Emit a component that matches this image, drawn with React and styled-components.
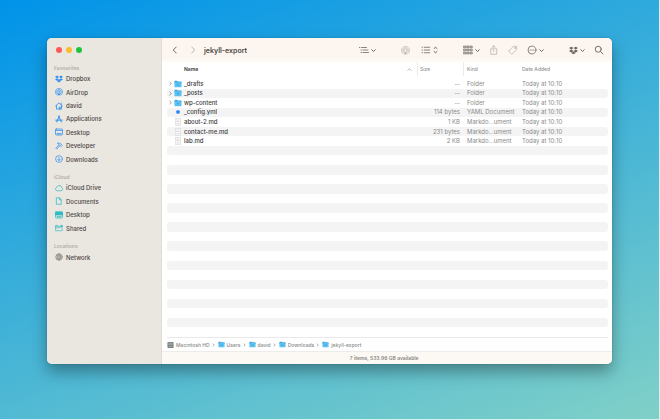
import styled, { createGlobalStyle } from "styled-components";
import { FaDropbox } from "react-icons/fa";

const GlobalStyle = createGlobalStyle`
  * {
    box-sizing: border-box;
  }

  body {
    margin: 0;
    font-family: Inter, "Liberation Sans", sans-serif;
    font-size: 7px;
    color: #4a4745;
  }

  button {
    padding: 0;
    border: 0;
    background: none;
    color: inherit;
    font: inherit;
  }

  a {
    color: inherit;
    text-decoration: none;
  }

  ul, ol {
    margin: 0;
    padding: 0;
    list-style: none;
  }

  svg {
    display: block;
    flex: none;
  }
`;

const Screen = styled.div`
  display: flex;
  min-height: 100vh;
  padding: 38px 47px 55px 47px;
  border: solid #d9eef0;
  border-width: 0 1px 1px 0;
  background: linear-gradient(160deg, #0093e9 0%, #80d0c7 100%);
`;

const Window = styled.div`
  flex: 1;
  display: flex;
  min-width: 0;
  overflow: hidden;
  border-radius: 5px;
  background: #ffffff;
  box-shadow: 0 8px 16px rgba(0, 0, 0, 0.34), 0 0 2px rgba(0, 0, 0, 0.2);
`;

const Sidebar = styled.aside`
  flex: none;
  width: 115px;
  padding: 9px 7px;
  border-right: 1px solid #dfdbd6;
  background: #eae6e0;
`;

const Lights = styled.div`
  display: flex;
  gap: 4px;
  padding: 0 2px;
  margin-bottom: 11px;
`;

const Light = styled.button`
  width: 6px;
  height: 6px;
  border-radius: 50%;
  background: ${({ $color }) => $color};
`;

const Group = styled.section`
  margin-bottom: 7px;
`;

const GroupTitle = styled.h2`
  margin: 0;
  font-size: 5px;
  font-weight: 600;
  line-height: 8px;
  color: #b3aea9;
`;

const Places = styled.ul`
  display: grid;
  grid-auto-rows: 1fr;
  min-height: ${({ $height }) => $height}px;
`;

const Place = styled.a`
  display: flex;
  align-items: center;
  gap: 3px;
  height: 100%;
  padding-left: 1px;
  font-size: 6px;
  font-weight: 500;

  svg {
    color: ${({ $tint }) => $tint};
  }
`;

const Main = styled.main`
  flex: 1;
  display: flex;
  flex-direction: column;
  min-width: 0;
`;

const Toolbar = styled.header`
  display: flex;
  align-items: center;
  height: 24px;
  padding: 0 8px;
  background: linear-gradient(#fdf6f0 80%, #fefaf7);
`;

const Title = styled.h1`
  flex: 1;
  margin: 0 0 0 6px;
  font-size: 7px;
  font-weight: 600;
`;

const Cluster = styled.div`
  display: flex;
  align-items: center;
  gap: ${({ $gap }) => $gap || 9}px;
  margin-left: ${({ $first }) => ($first ? 0 : 25)}px;
`;

const Tool = styled.button`
  display: flex;
  align-items: center;
  gap: 2px;
  color: ${({ $dim }) => ($dim ? "#b9b4b0" : "#6a6764")};
`;

const Files = styled.table`
  flex: 1;
  display: flex;
  flex-direction: column;
  margin: 0 4px 0 5px;
  color: #8a8a8a;

  thead {
    display: block;
  }

  tbody {
    flex: 1;
    display: grid;
    grid-auto-rows: 1fr;
  }

  tr {
    display: grid;
    grid-template-columns: 1fr 46px 55px 90px;
    align-items: center;
    min-height: 9px;
  }

  tbody tr:nth-child(even) {
    border-radius: 3px;
    background: #f4f4f5;
  }
`;

const Column = styled.th`
  display: flex;
  align-items: center;
  justify-content: space-between;
  height: 14px;
  margin-bottom: 3px;
  padding: 0 5px 0 ${({ $indent }) => $indent || 4}px;
  border-left: ${({ $line }) => ($line ? "1px solid #ebebeb" : "0")};
  font-size: 5px;
  font-weight: ${({ $active }) => ($active ? 700 : 500)};
  color: ${({ $active }) => ($active ? "#4b4b4b" : "#929292")};
`;

const Cell = styled.td`
  padding: 0 3px 0 4px;
  font-size: 6px;
  line-height: 8px;
  text-align: ${({ $right }) => ($right ? "right" : "left")};
  white-space: nowrap;
`;

const NameCell = styled(Cell)`
  display: flex;
  align-items: center;
  gap: 2px;
  padding: 0 2px;
  font-weight: 500;
  color: #3c3c3c;
`;

const Toggle = styled.span`
  width: 3px;
  color: #8c8c8c;
`;

const PathBar = styled.nav`
  height: 14px;
  margin: 0 4px 0 5px;
  border-top: 1px solid #e9e9e9;

  ol {
    display: flex;
    align-items: center;
    height: 100%;
  }

  li {
    display: flex;
    align-items: center;
    color: #8a8a8a;
  }
`;

const Crumb = styled.a`
  display: flex;
  align-items: center;
  gap: 2px;
  padding-right: 2px;
  font-size: 5px;
  font-weight: 500;
`;

const Separator = styled.span`
  padding-right: 3px;
`;

const StatusBar = styled.footer`
  height: 13px;
  padding-right: 6px;
  border-top: 1px solid #efebe8;
  background: #fcf8f4;
  font-size: 5px;
  font-weight: 600;
  font-variant-numeric: tabular-nums;
  line-height: 12px;
  text-align: center;
  color: #8a8682;
`;

const Glyph = ({ size = 8, box = 16, weight = 1.5, children }) => (
  <svg
    width={size}
    height={size}
    viewBox={`0 0 ${box} ${box}`}
    fill="none"
    stroke="currentColor"
    strokeWidth={weight}
    strokeLinecap="round"
    strokeLinejoin="round"
    aria-hidden="true"
  >
    {children}
  </svg>
);

const AirDropIcon = ({ size }) => (
  <Glyph size={size} weight={1.3}>
    <path d="M4 14A7.2 7.2 0 1 1 12 14" />
    <path d="M5 11.6A4.7 4.7 0 1 1 11 11.6" />
    <path d="M6.4 9.6A2.4 2.4 0 1 1 9.6 9.6" />
    <path d="M8 9.2L4.8 14.6H11.2Z" fill="currentColor" stroke="none" />
  </Glyph>
);

const HomeIcon = () => (
  <Glyph weight={1.6}>
    <path d="M1 8.2L8 1.8L15 8.2M3 7V14.2H13V7M12.4 2.5V5" />
    <path d="M8.5 14V10H10.5V14" />
  </Glyph>
);

const AppsIcon = () => (
  <Glyph weight={2}>
    <path d="M9 2L3.2 14M7 2L12.8 14M1.5 10.3H9M12 10.3H14.5" />
  </Glyph>
);

const DesktopIcon = ({ filled }) => (
  <Glyph>
    <rect x="1" y="2" width="14" height="12" rx="1.5" />
    <path d="M1 5H15" />
    {filled && <rect x="1" y="2" width="14" height="6" fill="currentColor" />}
    <path d="M4 11.5H12" strokeWidth="2" />
  </Glyph>
);

const HammerIcon = () => (
  <Glyph weight={1.4}>
    <path d="M5.5 2.6C9 1 11 2.5 12 4L14.5 7L12.5 9L9.5 6.5L8 7L7.2 5.6L8.4 4.2Q7.4 3 5.5 2.6Z" />
    <path d="M7.2 6.6L1.6 12.4L3.4 14.2L9.2 8" />
  </Glyph>
);

const DownloadIcon = () => (
  <Glyph weight={1.4}>
    <circle cx="8" cy="8" r="6.8" />
    <path d="M8 4.5V11M5.5 8.7L8 11.2L10.5 8.7" />
  </Glyph>
);

const CloudIcon = () => (
  <Glyph>
    <path d="M4 13.5A3.2 3.2 0 0 1 2.8 7.4A2.8 2.8 0 0 1 5.4 4.8A4.2 4.2 0 0 1 13 7A3.3 3.3 0 0 1 12.4 13.5Z" />
  </Glyph>
);

const DocumentIcon = () => (
  <Glyph>
    <path d="M3.5 1.5H9L12.5 5.5V14.5H3.5ZM8.8 1.8V5.8H12.3" />
  </Glyph>
);

const SharedIcon = () => (
  <Glyph weight={1.3}>
    <path d="M9.5 4.6H1.2V13.5H14.5V8M1.2 5V2.8H5L6.4 4.4M1.2 7.4H10.5" />
    <circle cx="13" cy="4.4" r="1.8" fill="currentColor" />
  </Glyph>
);

const NetworkIcon = () => (
  <Glyph weight={1}>
    <circle cx="8" cy="8" r="6.5" />
    <ellipse cx="8" cy="8" rx="3" ry="6.5" />
    <path d="M1.5 8H14.5M8 1.5V14.5M2.8 4.5H13.2M2.8 11.5H13.2" />
  </Glyph>
);

const ChevronDown = () => (
  <Glyph size={5} box={10} weight={2}>
    <path d="M1.5 3.5L5 7L8.5 3.5" />
  </Glyph>
);

const UpDown = () => (
  <svg width="5" height="10" viewBox="0 0 10 20" fill="none" stroke="currentColor" strokeWidth="2" aria-hidden="true">
    <path d="M1.5 7.5L5 4.5L8.5 7.5M1.5 12.5L5 15.5L8.5 12.5" />
  </svg>
);

const Arrow = ({ back }) => (
  <Glyph size={10} box={20} weight={2}>
    <path d={back ? "M12.5 4L6.5 10L12.5 16" : "M7.5 4L13.5 10L7.5 16"} />
  </Glyph>
);

const RowArrow = ({ height = 5 }) => (
  <svg width="3" height={height} viewBox="0 0 6 10" fill="none" stroke="currentColor" strokeWidth="1.6" aria-hidden="true">
    <path d="M1 1.5L4.8 5L1 8.5" />
  </svg>
);

const OutlineIcon = () => (
  <Glyph size={10} box={20} weight={1.6}>
    <path d="M0.8 5H1.8M5 5H15M4 10H5M8 10H18M4 15H5M8 15H19" />
  </Glyph>
);

const ListIcon = () => (
  <Glyph size={10} box={20} weight={1.6}>
    <path d="M2 4.5H3M6.5 4.5H17.5M2 10H3M6.5 10H17.5M2 15.5H3M6.5 15.5H17.5" />
  </Glyph>
);

const GridIcon = () => (
  <Glyph size={10} box={20} weight={1.3}>
    {[1.5, 8, 14.5].map((x) => (
      <g key={x}>
        <rect x={x} y="2" width="4" height="3.4" fill="currentColor" fillOpacity="0.3" />
        <rect x={x} y="8.2" width="4" height="3.4" fill="currentColor" fillOpacity="0.3" />
        <rect x={x} y="14.4" width="4" height="3.4" fill="currentColor" fillOpacity="0.3" />
      </g>
    ))}
  </Glyph>
);

const ShareIcon = () => (
  <Glyph size={10} box={20} weight={1.6}>
    <path d="M7 7.5H3.5V18.5H15.5V7.5H12M9.5 13V1.5M6.3 4.5L9.5 1.3L12.7 4.5" />
  </Glyph>
);

const TagIcon = () => (
  <Glyph size={10} box={20} weight={1.5}>
    <path d="M2 11.5L10.5 3L17 2.5L17.5 9L8.5 18Q7.5 18.5 6.5 17.5L2.2 13.5Q1.5 12.5 2 11.5Z" />
    <circle cx="14" cy="6" r="1" />
  </Glyph>
);

const MoreIcon = () => (
  <Glyph size={10} box={20} weight={1.6}>
    <circle cx="10" cy="10" r="8" />
    <path d="M6.3 10H6.5M9.9 10H10.1M13.5 10H13.7" strokeWidth="2.4" />
  </Glyph>
);

const SearchIcon = () => (
  <Glyph size={10} box={20} weight={1.9}>
    <circle cx="8.5" cy="8.5" r="6" />
    <path d="M13 13L18 18" />
  </Glyph>
);

const FolderIcon = ({ size = 8 }) => (
  <svg width={size} height={size} viewBox="0 0 16 16" aria-hidden="true">
    <path d="M1 2.5Q1 1.5 2 1.5H6L7.5 3H14Q15 3 15 4V7H1Z" fill="#3ba7dd" />
    <rect x="1" y="4.5" width="14" height="10" rx="1" fill="#5bc1f2" />
    <rect x="6" y="7.5" width="4" height="3.5" fill="#47addf" />
  </svg>
);

const FileIcon = ({ kind }) => (
  <svg width="8" height="8" viewBox="0 0 16 16" aria-hidden="true">
    <rect x="2.5" y="0.7" width="11" height="14.6" fill="#fbfbfb" stroke={kind === "yml" ? "#eeeeee" : "#cfcfcf"} />
    {kind === "yml" ? (
      <rect x="4.5" y="4.5" width="7" height="7" rx="2" fill="#2f86f6" />
    ) : (
      <path d="M5 4H9M5 7H11M5 11.5H11" stroke="#c2c2c2" strokeWidth="1.2" />
    )}
  </svg>
);

const DiskIcon = () => (
  <svg width="7" height="8" viewBox="0 0 14 16" aria-hidden="true">
    <rect x="1" y="2" width="12" height="12" rx="1.5" fill="#6d7472" />
    <rect x="2.5" y="3" width="9" height="6" fill="#98a29e" />
    <path d="M3 11.5H11" stroke="#c8d0cc" strokeWidth="1.4" />
  </svg>
);

const blue = "#2f8ff0";
const teal = "#2fbcc4";

const groups = [
  {
    title: "Favourites",
    tint: blue,
    height: 94,
    items: [
      { name: "Dropbox", icon: <FaDropbox size={8} /> },
      { name: "AirDrop", icon: <AirDropIcon /> },
      { name: "david", icon: <HomeIcon /> },
      { name: "Applications", icon: <AppsIcon /> },
      { name: "Desktop", icon: <DesktopIcon /> },
      { name: "Developer", icon: <HammerIcon /> },
      { name: "Downloads", icon: <DownloadIcon /> },
    ],
  },
  {
    title: "iCloud",
    tint: teal,
    height: 54,
    items: [
      { name: "iCloud Drive", icon: <CloudIcon /> },
      { name: "Documents", icon: <DocumentIcon /> },
      { name: "Desktop", icon: <DesktopIcon filled /> },
      { name: "Shared", icon: <SharedIcon /> },
    ],
  },
  {
    title: "Locations",
    tint: "#77736f",
    height: 14,
    items: [{ name: "Network", icon: <NetworkIcon /> }],
  },
];

const files = [
  { name: "_drafts", size: "--", kind: "Folder", type: "folder" },
  { name: "_posts", size: "--", kind: "Folder", type: "folder" },
  { name: "wp-content", size: "--", kind: "Folder", type: "folder" },
  { name: "_config.yml", size: "114 bytes", kind: "YAML Document", type: "yml" },
  { name: "about-2.md", size: "1 KB", kind: "Markdo...ument", type: "md" },
  { name: "contact-me.md", size: "231 bytes", kind: "Markdo...ument", type: "md" },
  { name: "lab.md", size: "2 KB", kind: "Markdo...ument", type: "md" },
];

const emptyRows = Array.from({ length: 20 }, (_, idx) => idx);

const path = ["Macintosh HD", "Users", "david", "Downloads", "jekyll-export"];

const App = () => (
  <>
    <GlobalStyle />
    <Screen>
      <Window>
        <Sidebar>
          <Lights>
            <Light $color="#fb5c5b" aria-label="Close" />
            <Light $color="#fbbc2e" aria-label="Minimise" />
            <Light $color="#1fc43e" aria-label="Zoom" />
          </Lights>
          {groups.map((group) => (
            <Group key={group.title}>
              <GroupTitle>{group.title}</GroupTitle>
              <Places $height={group.height}>
                {group.items.map((item) => (
                  <li key={item.name}>
                    <Place href="#" $tint={group.tint}>
                      {item.icon}
                      {item.name}
                    </Place>
                  </li>
                ))}
              </Places>
            </Group>
          ))}
        </Sidebar>

        <Main>
          <Toolbar>
            <Cluster $first $gap={8}>
              <Tool aria-label="Back"><Arrow back /></Tool>
              <Tool aria-label="Forward" $dim><Arrow /></Tool>
            </Cluster>
            <Title>jekyll-export</Title>
            <Cluster $first>
              <Tool aria-label="Group"><OutlineIcon /><ChevronDown /></Tool>
            </Cluster>
            <Cluster $gap={11}>
              <Tool aria-label="AirDrop" $dim><AirDropIcon size={9} /></Tool>
              <Tool aria-label="View"><ListIcon /><UpDown /></Tool>
            </Cluster>
            <Cluster>
              <Tool aria-label="Arrange"><GridIcon /><ChevronDown /></Tool>
              <Tool aria-label="Share" $dim><ShareIcon /></Tool>
              <Tool aria-label="Tags" $dim><TagIcon /></Tool>
              <Tool aria-label="More"><MoreIcon /><ChevronDown /></Tool>
            </Cluster>
            <Cluster>
              <Tool aria-label="Dropbox"><FaDropbox size={9} /><ChevronDown /></Tool>
              <Tool aria-label="Search"><SearchIcon /></Tool>
            </Cluster>
          </Toolbar>

          <Files>
            <thead>
              <tr>
                <Column $active $indent={17}>
                  Name
                  <svg width="5" height="3" viewBox="0 0 10 6" fill="none" stroke="#a5a5a5" strokeWidth="1.6" aria-hidden="true">
                    <path d="M1 5L5 1.5L9 5" />
                  </svg>
                </Column>
                <Column $line $indent={2}>Size</Column>
                <Column $line $indent={3}>Kind</Column>
                <Column>Date Added</Column>
              </tr>
            </thead>
            <tbody>
              {files.map((file) => (
                <tr key={file.name}>
                  <NameCell>
                    <Toggle>{file.type === "folder" && <RowArrow />}</Toggle>
                    {file.type === "folder" ? <FolderIcon /> : <FileIcon kind={file.type} />}
                    {file.name}
                  </NameCell>
                  <Cell $right>{file.size}</Cell>
                  <Cell>{file.kind}</Cell>
                  <Cell>Today at 10:10</Cell>
                </tr>
              ))}
              {emptyRows.map((idx) => (
                <tr key={idx} />
              ))}
            </tbody>
          </Files>

          <PathBar aria-label="Path">
            <ol>
              {path.map((name, idx) => (
                <li key={name}>
                  <Crumb href="#">
                    {idx === 0 ? <DiskIcon /> : <FolderIcon size={7} />}
                    {name}
                  </Crumb>
                  {idx < path.length - 1 && (
                    <Separator><RowArrow height={4} /></Separator>
                  )}
                </li>
              ))}
            </ol>
          </PathBar>
          <StatusBar>7 items, 533.96 GB available</StatusBar>
        </Main>
      </Window>
    </Screen>
  </>
);

export default App;
